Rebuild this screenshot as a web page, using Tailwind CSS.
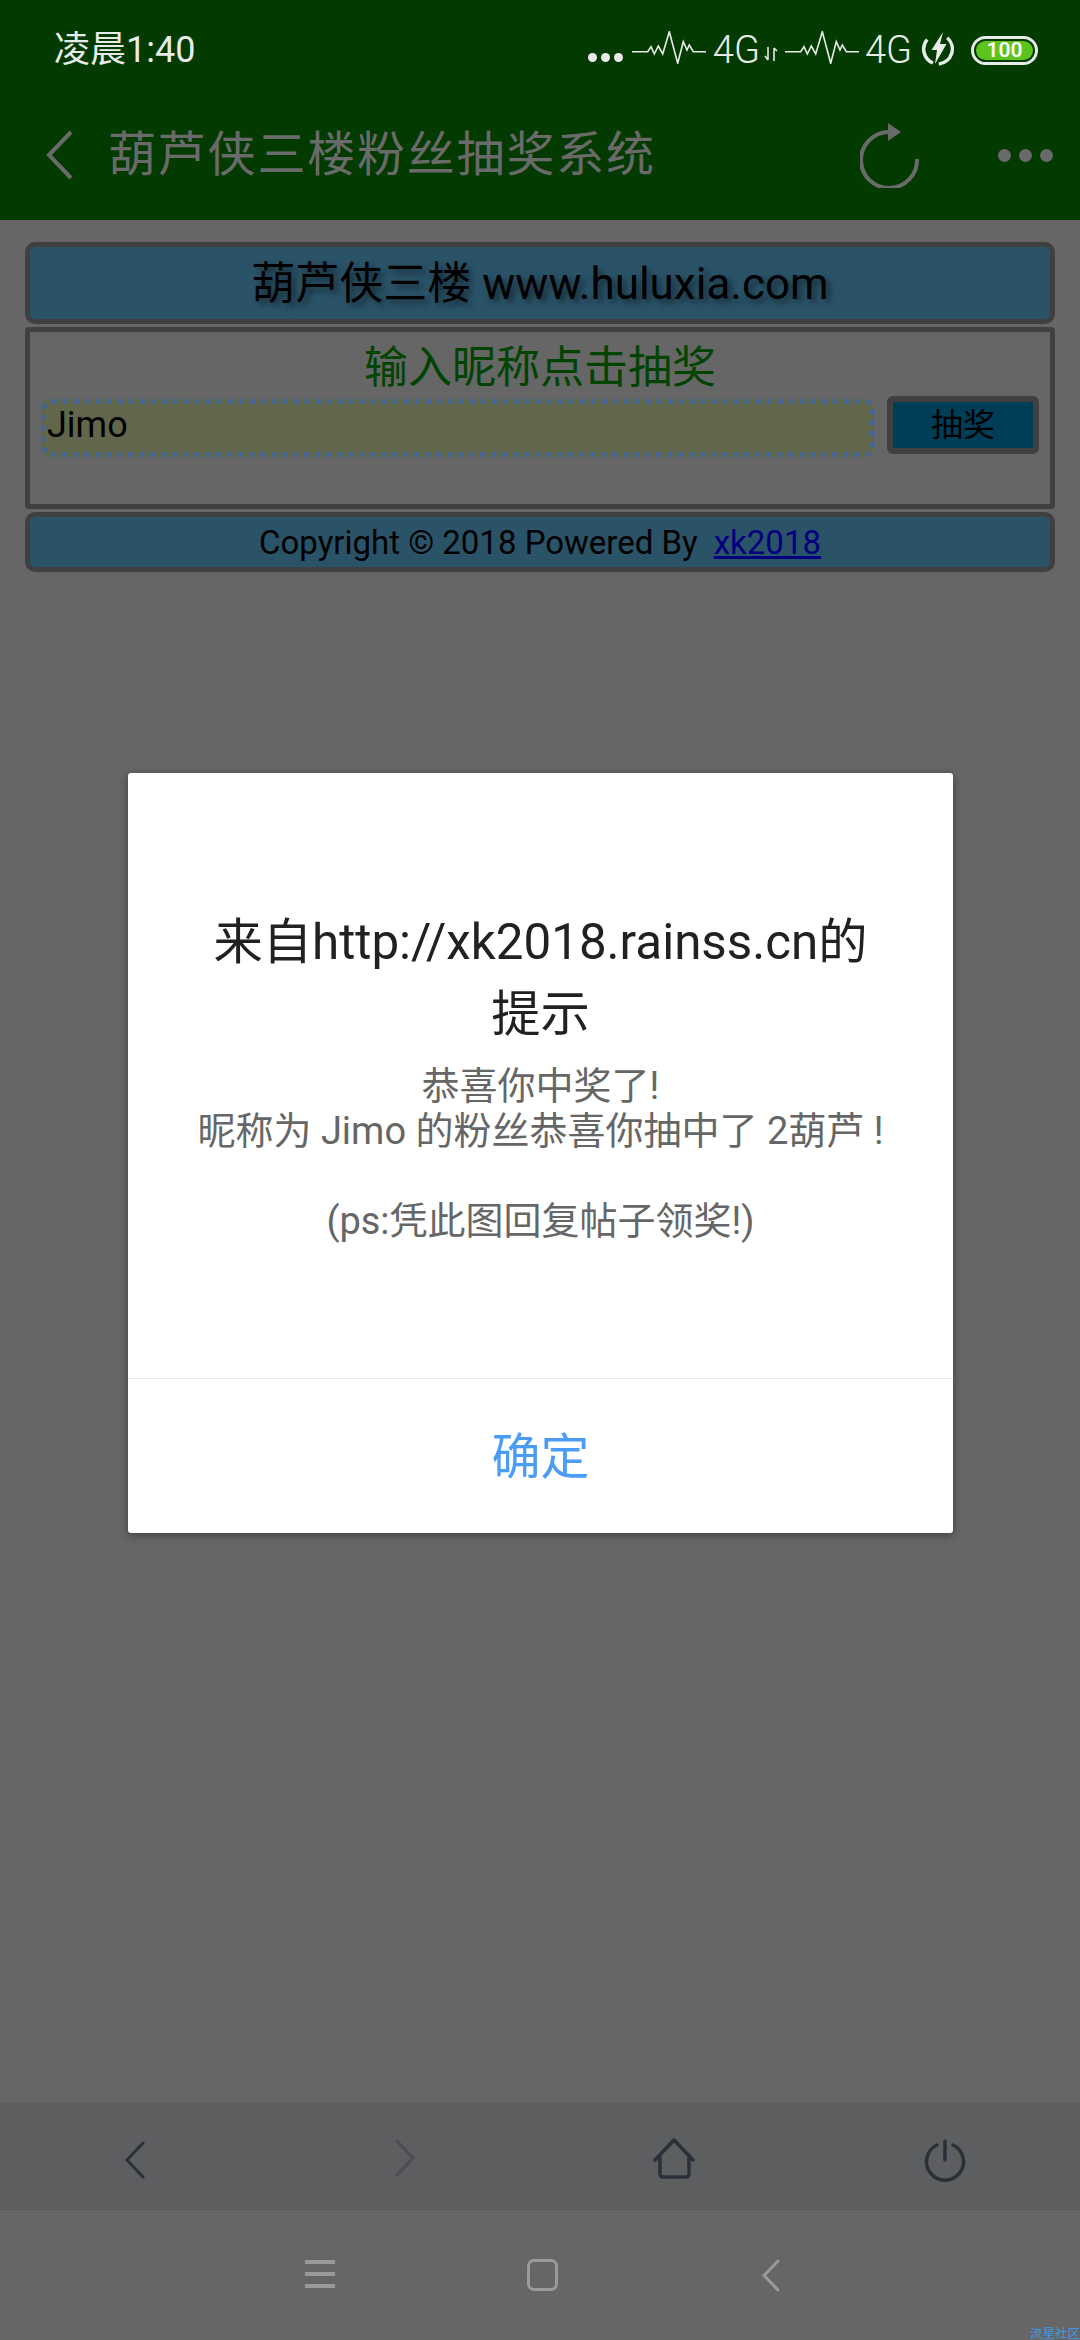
<!DOCTYPE html>
<html lang="zh-CN">
<head>
    <meta charset="UTF-8">
    <meta name="viewport" content="width=device-width, initial-scale=1.0">
    <title>葫芦侠三楼粉丝抽奖系统</title>
    <script src="https://cdn.jsdelivr.net/npm/@tailwindcss/browser@4"></script>
</head>
<body class="bg-[#666666]">
    <div class="relative w-[1080px] h-[2340px] overflow-hidden flex flex-col bg-[#666666] font-['Roboto','Noto_Sans_CJK_SC',sans-serif]">

        <!-- Status bar + title bar -->
        <header class="h-[220px] shrink-0 bg-[#023a00]">
            <div class="h-[100px] flex items-center text-[#e8ece8]">
                <span class="ml-[54px] text-[36px] leading-none">凌晨1:40</span>
                <div class="ml-auto flex items-center">
                    <div class="flex gap-[4px] mt-[14px]">
                        <span class="w-[9px] h-[9px] rounded-full bg-[#e8ece8]"></span>
                        <span class="w-[9px] h-[9px] rounded-full bg-[#e8ece8]"></span>
                        <span class="w-[9px] h-[9px] rounded-full bg-[#e8ece8]"></span>
                    </div>
                    <svg class="ml-[9px] mt-[-5px]" width="74" height="33" viewBox="0 0 74 33" fill="none" stroke="#e8ece8" stroke-width="1.6"><path d="M0 20.7H15.7L19 15.7L22.3 23L26.3 15L30.7 23L37.3.7L45.700 32.3L51.3 10.7L55 19L57.3 14L61.3 20.7H74"/></svg>
                    <span class="ml-[7px] text-[38px] leading-none font-light">4G</span>
                    <svg class="ml-[4px] mt-[8px]" width="14" height="16" viewBox="0 0 14 16" fill="none" stroke="#e8ece8" stroke-width="1.6"><path d="M4 1V14M1 10L4 14M10 15V2M10 2L13 5"/></svg>
                    <svg class="ml-[7px] mt-[-5px]" width="74" height="33" viewBox="0 0 74 33" fill="none" stroke="#e8ece8" stroke-width="1.6"><path d="M0 20.7H15.7L19 15.7L22.3 23L26.3 15L30.7 23L37.3.7L45.700 32.3L51.3 10.7L55 19L57.3 14L61.3 20.7H74"/></svg>
                    <span class="ml-[6px] text-[38px] leading-none font-light">4G</span>
                    <svg class="ml-[9px] mt-[-3px]" width="34" height="34" viewBox="0 0 34 34" fill="none"><path d="M6.200 7.500A15 15 0 0 0 12 31M26.200 5.800A15 15 0 0 1 17.800 32" stroke="#e8ece8" stroke-width="3.500"/><path d="M22 0L10.500 18H16L14 32L25.500 12H19Z" fill="#e8ece8"/></svg>
                    <div class="ml-[16px] mr-[42px] w-[67px] h-[29px] p-[2px] rounded-full border-[3px] border-[#e8ece8] flex">
                        <div class="flex-1 rounded-full bg-[#5cc41c] flex items-center justify-center text-[21px] leading-none font-semibold text-white">100</div>
                    </div>
                </div>
            </div>
            <div class="h-[120px] pb-[10px] flex items-center text-[#6a6a6a]">
                <svg class="ml-[45px]" width="28" height="50" viewBox="0 0 28 50" fill="none" stroke="#6a6a6a" stroke-width="4"><path d="M26 2L4 25L26 48"/></svg>
                <span class="ml-[35px] text-[48px] leading-none tracking-[1.8px]">葫芦侠三楼粉丝抽奖系统</span>
                <svg class="ml-auto" width="60" height="66" viewBox="0 0 60 66" fill="none"><path d="M57 37A28 28 0 1 1 29 10" stroke="#6a6a6a" stroke-width="4"/><path d="M28 1L41 10L28 19Z" fill="#6a6a6a"/></svg>
                <div class="ml-[78px] mr-[27px] flex gap-[8px]">
                    <span class="w-[13px] h-[13px] rounded-full bg-[#6a6a6a]"></span>
                    <span class="w-[13px] h-[13px] rounded-full bg-[#6a6a6a]"></span>
                    <span class="w-[13px] h-[13px] rounded-full bg-[#6a6a6a]"></span>
                </div>
            </div>
        </header>

        <!-- Page -->
        <main class="flex-1 px-[25px] pt-[22px] flex flex-col gap-[3px] text-black">
            <div class="h-[82px] pt-[2px] border-[5px] border-[#404040] rounded-[10px] bg-[#2a5368] flex items-center justify-center text-[44px] leading-none [text-shadow:4px_4px_6px_rgba(0,0,0,0.5)]">葫芦侠三楼 www.huluxia.com</div>
            <div class="h-[182px] border-[5px] border-[#404040] rounded-[4px] px-[11px]">
                <div class="h-[64px] pt-[7px] flex items-center justify-center text-[44px] leading-none text-[#014401]">输入昵称点击抽奖</div>
                <div class="flex items-start gap-[13px]">
                    <div class="relative mt-[3px] w-[834px] h-[58px]">
                        <input class="w-full h-full pl-[6px] pb-[6px] rounded-[10px] bg-[#62664a] text-[36px] text-black outline-none" value="Jimo">
                        <svg class="absolute inset-0" width="834" height="58" fill="none"><rect x="2.500" y="2.500" width="829" height="53" rx="8" stroke="#466690" stroke-width="5" stroke-dasharray="5.500 5.500"/></svg>
                    </div>
                    <button class="w-[152px] h-[58px] border-[6px] border-[#404040] rounded-[6px] bg-[#003d56] text-[32px] leading-none text-black">抽奖</button>
                </div>
            </div>
            <div class="h-[60px] border-[5px] border-[#404040] rounded-[10px] bg-[#2a5368] flex items-center justify-center text-[33px] leading-none">
                Copyright © 2018 Powered By<a class="ml-[16px] underline text-[#00007f]" href="#">xk2018</a>
            </div>
        </main>

        <!-- Browser toolbar -->
        <div class="h-[107px] shrink-0 bg-[#5d5e60] border-b border-[#575757] grid grid-cols-4">
            <div class="flex items-center justify-center">
                <svg class="mt-[7px]" width="24" height="38" viewBox="0 0 24 38" fill="none" stroke="#2c2f38" stroke-width="3" stroke-linecap="round"><path d="M20 2L4 19L20 36"/></svg>
            </div>
            <div class="flex items-center justify-center">
                <svg class="mt-[3px]" width="24" height="38" viewBox="0 0 24 38" fill="none" stroke="#4c4d50" stroke-width="3" stroke-linecap="round"><path d="M4 2L20 19L4 36"/></svg>
            </div>
            <div class="flex items-center justify-center">
                <svg class="mt-[5px] ml-[-2px]" width="44" height="42" viewBox="0 0 44 42" fill="none" stroke="#2c2f38" stroke-width="3.500" stroke-linejoin="round" stroke-linecap="round"><path d="M3 22L22 2L41 22M8 17V36Q8 39 11 39H34Q37 39 37 36V17"/></svg>
            </div>
            <div class="flex items-center justify-center">
                <svg class="mt-[7px]" width="44" height="44" viewBox="0 0 44 44" fill="none" stroke="#2c2f38" stroke-width="3.500" stroke-linecap="round"><path d="M14 7A18.500 18.500 0 1 0 30 7M22 3V22"/></svg>
            </div>
        </div>

        <!-- System nav bar -->
        <nav class="h-[130px] shrink-0 flex items-start">
            <div class="ml-[305px] mt-[50px] w-[30px] flex flex-col gap-[8px]">
                <span class="h-[4px] bg-[#9a9a9a]"></span>
                <span class="h-[4px] bg-[#9a9a9a]"></span>
                <span class="h-[4px] bg-[#9a9a9a]"></span>
            </div>
            <div class="ml-[192px] mt-[49px] w-[31px] h-[32px] rounded-[7px] border-[3px] border-[#9a9a9a]"></div>
            <svg class="ml-[203px] mt-[49px]" width="20" height="33" viewBox="0 0 20 33" fill="none" stroke="#9a9a9a" stroke-width="3" stroke-linecap="round"><path d="M17 2L3 16.500L17 31"/></svg>
        </nav>

        <!-- Alert dialog -->
        <div class="absolute left-[128px] top-[773px] w-[825px] h-[760px] bg-white rounded-[3px] shadow-[0_2px_8px_rgba(0,0,0,0.4)] flex flex-col">
            <div class="h-[605px] pt-[133px] px-[65px] text-center">
                <h2 class="text-[49.300px] leading-[72px] font-normal text-[#212121]">来自http://xk2018.rainss.cn的提示</h2>
                <p class="mt-[14px] text-[38px] leading-[45px] text-[#666666]">恭喜你中奖了!<br>昵称为 Jimo 的粉丝恭喜你抽中了 2葫芦 !<br><br>(ps:凭此图回复帖子领奖!)</p>
            </div>
            <button class="flex-1 pt-[3px] border-t border-[#e6e6e6] text-[49px] leading-none text-[#4a9cf5]">确定</button>
        </div>

        <span class="absolute right-0 bottom-0 text-[12.500px] leading-[12px] text-[#3f98e8]">流星社区</span>
    </div>
</body>
</html>
